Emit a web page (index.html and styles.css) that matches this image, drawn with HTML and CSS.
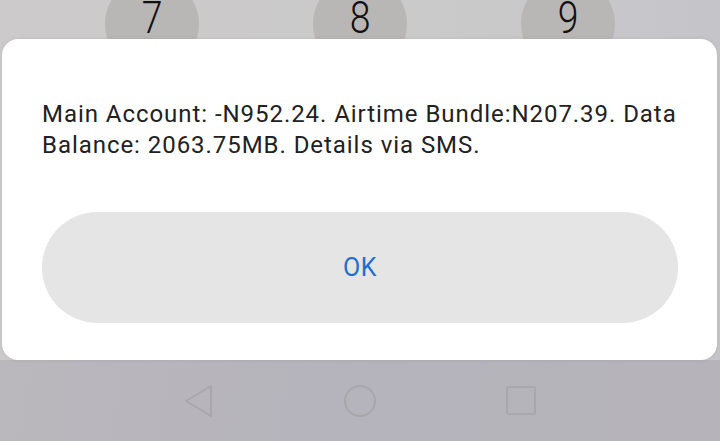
FILE: index.html
```html
<!DOCTYPE html>
<html lang="en">
<head>
    <meta charset="UTF-8">
    <meta name="viewport" content="width=device-width, initial-scale=1.0">
    <title>Balance</title>
    <link rel="stylesheet" href="styles.css">
</head>
<body>
    <div class="screen">
        <!-- dialer keypad peeking out behind the dialog -->
        <div class="keypad">
            <div class="key"><span>7</span></div>
            <div class="key"><span>8</span></div>
            <div class="key"><span>9</span></div>
        </div>

        <div class="dialog">
            <p class="message">Main Account: -N952.24. Airtime Bundle:N207.39. Data Balance: 2063.75MB. Details via SMS.</p>
            <button class="ok">OK</button>
        </div>

        <div class="navbar">
            <svg class="nav-icon" width="32" height="34" viewBox="0 0 32 34">
                <path d="M28 2 L3 17 L28 32 Z" fill="none" stroke="#a8a7ab" stroke-width="2" stroke-linejoin="round"/>
            </svg>
            <svg class="nav-icon" width="34" height="34" viewBox="0 0 34 34">
                <circle cx="17" cy="17" r="15" fill="none" stroke="#a8a7ab" stroke-width="2"/>
            </svg>
            <svg class="nav-icon" width="32" height="30" viewBox="0 0 32 30">
                <rect x="2" y="1" width="28" height="27" rx="1.5" fill="none" stroke="#a8a7ab" stroke-width="2"/>
            </svg>
        </div>
    </div>
</body>
</html>
```

FILE: styles.css
```css
body {
    margin: 0;
    font-family: Roboto, "Noto Sans", sans-serif;
    background: #cbcaca;
}
.screen {
    width: 720px;
    height: 441px;
    overflow: hidden;
    display: flex;
    flex-direction: column;
    background: linear-gradient(90deg, #cccaca 0%, #cbcaca 60%, #c5c4c9 100%);
}
.keypad {
    height: 39px;
    overflow: hidden;
    display: flex;
    gap: 114px;
    padding-left: 105px;
    flex-shrink: 0;
}
.key {
    width: 94px;
    height: 94px;
    margin-top: -23px;
    border-radius: 50%;
    background: #b8b7b5;
    display: flex;
    justify-content: center;
}
.key span {
    font-size: 44px;
    font-weight: 300;
    color: #111;
    line-height: 36px;
    margin-top: 23px;
    transform: scaleX(0.85);
}
.dialog {
    margin: 0 3px 0 2px;
    height: 321px;
    box-sizing: border-box;
    padding: 60px 40px 38px 40px;
    background: #fff;
    border-radius: 16px;
    box-shadow: 0 0 4px rgba(0, 0, 0, 0.08);
    position: relative;
    z-index: 1;
    flex-shrink: 0;
}
.message {
    margin: 0;
    font-size: 24px;
    letter-spacing: 0.95px;
    line-height: 30.5px;
    color: #212121;
}
.ok {
    display: block;
    width: 636px;
    height: 111px;
    margin-top: 52px;
    border: none;
    border-radius: 56px;
    background: #e5e5e5;
    color: #1f6fcf;
    font-family: Roboto, "Noto Sans", sans-serif;
    font-size: 25px;
    letter-spacing: 0.5px;
}
.navbar {
    flex: 1;
    background: linear-gradient(100deg, #bab7bd 0%, #b5b3bb 50%, #b6b4ba 100%);
    display: flex;
    align-items: center;
    justify-content: center;
    gap: 128px;
    padding-top: 1px;
}
```
